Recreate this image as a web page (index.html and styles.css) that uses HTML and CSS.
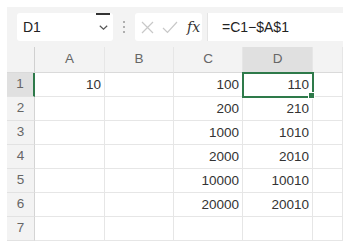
FILE: index.html
```html
<!DOCTYPE html>
<html>
<head>
<meta charset="utf-8">
<link rel="stylesheet" href="styles.css">
</head>
<body>
<div class="app">
  <div class="toolbar">
    <div class="namebox">
      <span class="name">D1</span>
      <span class="hoverbar"></span>
      <svg class="chev" width="9" height="5" viewBox="0 0 9 5"><path d="M0.8 0.8 L4.5 4.2 L8.2 0.8" fill="none" stroke="#555" stroke-width="1.2"/></svg>
    </div>
    <div class="dots"><i></i><i></i><i></i></div>
    <div class="fbtns">
      <svg width="13" height="13" viewBox="0 0 13 13"><path d="M1 1 L12 12 M12 1 L1 12" stroke="#c8c8c8" stroke-width="1.2" fill="none"/></svg>
      <svg width="16" height="13" viewBox="0 0 16 13"><path d="M1 7 L5.5 11.5 L15 1" stroke="#c8c8c8" stroke-width="1.2" fill="none"/></svg>
      <span class="fx">fx</span>
    </div>
    <div class="formula">=C1−$A$1</div>
  </div>
  <div class="sheet">
    <div class="corner"></div>
    <div class="ch">A</div>
    <div class="ch">B</div>
    <div class="ch">C</div>
    <div class="ch sel">D</div>
    <div class="ch"></div>

    <div class="rh sel">1</div>
    <div class="c">10</div><div class="c"></div><div class="c">100</div><div class="c active">110</div><div class="c"></div>

    <div class="rh">2</div>
    <div class="c"></div><div class="c"></div><div class="c">200</div><div class="c">210</div><div class="c"></div>

    <div class="rh">3</div>
    <div class="c"></div><div class="c"></div><div class="c">1000</div><div class="c">1010</div><div class="c"></div>

    <div class="rh">4</div>
    <div class="c"></div><div class="c"></div><div class="c">2000</div><div class="c">2010</div><div class="c"></div>

    <div class="rh">5</div>
    <div class="c"></div><div class="c"></div><div class="c">10000</div><div class="c">10010</div><div class="c"></div>

    <div class="rh">6</div>
    <div class="c"></div><div class="c"></div><div class="c">20000</div><div class="c">20010</div><div class="c"></div>

    <div class="rh">7</div>
    <div class="c"></div><div class="c"></div><div class="c"></div><div class="c"></div><div class="c"></div>
  </div>
</div>
</body>
</html>
```
FILE: styles.css
```css
* { box-sizing: border-box; }
html, body { margin: 0; padding: 0; background: #fff; }
body { font-family: "Liberation Sans", Arial, sans-serif; }
.app {
  margin: 7px 0 0 7px;
  width: 336px;
  height: 234px;
  background: #f3f3f3;
  display: flex;
  flex-direction: column;
}
.toolbar {
  height: 40px;
  display: flex;
  align-items: flex-start;
  padding: 6px 0 0 10px;
}
.namebox {
  position: relative;
  width: 96px;
  height: 28px;
  background: #fff;
  border-radius: 3px;
  display: flex;
  align-items: center;
  justify-content: space-between;
  padding: 0 5px 0 6px;
}
.name { font-size: 14px; color: #222; }
.hoverbar {
  position: absolute;
  top: 0;
  right: 3px;
  width: 14px;
  height: 2px;
  background: #333;
}
.chev { margin-top: 1px; }
.dots {
  width: 22px;
  height: 28px;
  display: flex;
  flex-direction: column;
  align-items: center;
  justify-content: center;
  gap: 3px;
}
.dots i { display: block; width: 2px; height: 2px; background: #999; border-radius: 1px; }
.fbtns {
  width: 67px;
  height: 28px;
  background: #fff;
  border-radius: 3px;
  display: flex;
  align-items: center;
  padding: 0 0 0 6px;
  gap: 8px;
}
.fx {
  font-family: "DejaVu Serif", "Liberation Serif", serif;
  font-style: italic;
  font-size: 14px;
  color: #333;
  margin-left: 1px;
}
.formula {
  flex: 1;
  height: 28px;
  margin-left: 5px;
  background: #fff;
  border-left: 1px solid #e4e4e4;
  font-size: 14px;
  color: #222;
  display: flex;
  align-items: center;
  padding-left: 14px;
}
.sheet {
  flex: 1;
  display: grid;
  grid-template-columns: 28px 70px 69px 69px 70px 1fr;
  grid-template-rows: 26px repeat(7, 24px);
  font-size: 13.5px;
}
.corner, .ch, .rh {
  background: #f3f3f3;
  color: #666;
  border-right: 1px solid #dadada;
  border-bottom: 1px solid #dadada;
}
.corner { border-right: 1px solid #d0d0d0; }
.ch {
  display: flex;
  align-items: center;
  justify-content: center;
  padding-bottom: 3px;
  border-right-color: #e6e6e6;
}
.ch.sel { background: #e0e0e0; border-bottom: 1px solid #2e7a4a; }
.rh {
  display: flex;
  align-items: center;
  justify-content: center;
  padding-bottom: 2px;
  border-bottom-color: #e2e2e2;
  border-right-color: #d4d4d4;
}
.rh.sel { background: #e0e0e0; border-right: 2px solid #2e7a4a; }
.c {
  background: #fff;
  border-right: 1px solid #e6e6e6;
  border-bottom: 1px solid #e6e6e6;
  color: #333;
  text-align: right;
  padding: 3px 3px 0 0;
  line-height: 18px;
}
.c.active {
  position: relative;
  outline: 2px solid #2e7a4a;
  outline-offset: -1px;
}
.c.active::after {
  content: "";
  position: absolute;
  right: -3px;
  bottom: -3px;
  width: 5px;
  height: 5px;
  background: #2e7a4a;
  border: 1px solid #fff;
}
```
